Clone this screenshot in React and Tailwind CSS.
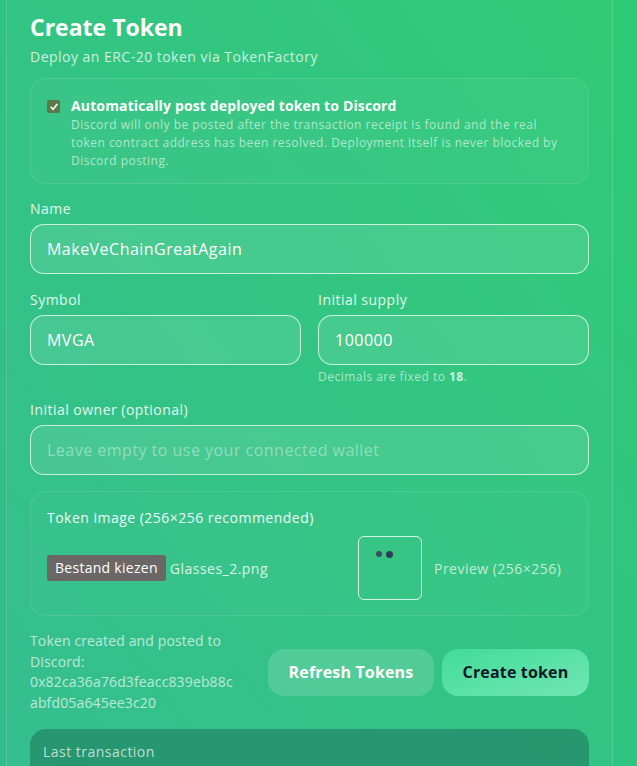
export default function App() {
  return (
    <div
      className="min-h-[766px] w-[637px] overflow-hidden bg-linear-to-tr from-[#31bc8f] via-[#2fc381] to-[#2dca74] tracking-[0.03em] text-white"
      style={{ fontFamily: '"Open Sans", "Liberation Sans", sans-serif' }}
    >
      <div className="ml-[6px] mr-[24px] -mt-[20px] border border-white/15 bg-white/[0.02] px-[23px] pt-[29px] pb-8">
        <h1 className="text-[23px] font-bold leading-[34px] tracking-[0]">Create Token</h1>
        <p className="mt-[3px] text-[14px] leading-[20px] text-white/75">Deploy an ERC-20 token via TokenFactory</p>

        {/* discord toggle */}
        <div className="mt-[11px] rounded-2xl border border-white/10 bg-white/[0.03] px-[16px] pt-[18px] pb-[13px]">
          <label className="flex gap-[11px]">
            <span className="mt-[3px] flex h-[13px] w-[13px] shrink-0 items-center justify-center rounded-[2px] bg-[#5b7a4a]">
              <svg viewBox="0 0 12 12" className="h-[10px] w-[10px]">
                <path d="M2.5 6.3 L5 8.8 L9.5 3" fill="none" stroke="white" strokeWidth="2" strokeLinecap="round" strokeLinejoin="round" />
              </svg>
            </span>
            <span>
              <span className="block text-[14px] font-bold leading-[18px] tracking-[0.01em]">Automatically post deployed token to Discord</span>
              <span className="mt-[1px] block text-[12px] leading-[18px] text-white/60">
                Discord will only be posted after the transaction receipt is found and the real token contract address has been resolved. Deployment itself is never blocked by Discord posting.
              </span>
            </span>
          </label>
        </div>

        {/* name */}
        <div className="mt-[15px]">
          <div className="mb-[5px] text-[14px] leading-[20px] text-white/85">Name</div>
          <div className="flex h-[50px] items-center rounded-[14px] border border-white/70 bg-white/10 px-[16px] text-[16px]">
            MakeVeChainGreatAgain
          </div>
        </div>

        <div className="mt-[16px] grid grid-cols-2 gap-[17px]">
          <div>
            <div className="mb-[5px] text-[14px] leading-[20px] text-white/85">Symbol</div>
            <div className="flex h-[50px] items-center rounded-[14px] border border-white/70 bg-white/10 px-[16px] text-[16px]">
              MVGA
            </div>
          </div>
          <div>
            <div className="mb-[5px] text-[14px] leading-[20px] text-white/85">Initial supply</div>
            <div className="flex h-[50px] items-center rounded-[14px] border border-white/70 bg-white/10 px-[16px] text-[16px]">
              100000
            </div>
            <div className="mt-[4px] text-[12px] leading-[16px] text-white/60">
              Decimals are fixed to <b className="text-white/75">18</b>.
            </div>
          </div>
        </div>

        {/* owner */}
        <div className="mt-[15px]">
          <div className="mb-[5px] text-[14px] leading-[20px] text-white/85">Initial owner (optional)</div>
          <div className="flex h-[50px] items-center rounded-[14px] border border-white/70 bg-white/10 px-[16px] text-[16px] text-white/40">
            Leave empty to use your connected wallet
          </div>
        </div>

        {/* token image */}
        <div className="mt-[16px] rounded-2xl border border-white/10 bg-white/[0.02] px-[16px] pt-[16px] pb-[15px]">
          <div className="text-[14px] leading-[20px] text-white/90">Token image (256×256 recommended)</div>
          <div className="mt-[8px] flex items-center">
            <div className="flex w-[311px] items-center gap-[4px]">
              <span className="rounded-[2px] bg-[#6b6767] px-[8px] py-[3px] text-[14px] leading-[20px] tracking-[0.02em] text-white">Bestand kiezen</span>
              <span className="text-[14px] text-white/80">Glasses_2.png</span>
            </div>
            <div className="relative h-[64px] w-[64px] rounded-md border border-white/80">
              <span className="absolute left-[17px] top-[14px] h-[6px] w-[6px] rounded-full bg-[#3a4d63]" />
              <span className="absolute left-[27px] top-[14px] h-[7px] w-[7px] rounded-full bg-[#2c3e55]" />
            </div>
            <span className="ml-[12px] text-[14px] text-white/70">Preview (256×256)</span>
          </div>
        </div>

        {/* status + buttons */}
        <div className="mt-[15px] flex items-center justify-between">
          <p className="w-[208px] break-words text-[14px] leading-[20.5px] tracking-[0.01em] text-white/65">
            Token created and posted to Discord: 0x82ca36a76d3feacc839eb88cabfd05a645ee3c20
          </p>
          <div className="flex gap-[8px]">
            <button className="h-[47px] w-[166px] rounded-2xl bg-white/15 text-[16px] font-bold tracking-[0.01em] text-white">Refresh Tokens</button>
            <button className="h-[47px] w-[147px] rounded-2xl bg-linear-to-br from-[#3fdc98] to-[#6fe6b4] text-[16px] font-bold tracking-[0.01em] text-[#111827]">
              Create token
            </button>
          </div>
        </div>

        <div className="mt-[16px] h-[80px] rounded-2xl bg-[#258f6c]/85 px-[13px] pt-[12px]">
          <div className="text-[14px] text-white/70">Last transaction</div>
        </div>
      </div>
    </div>
  );
}
